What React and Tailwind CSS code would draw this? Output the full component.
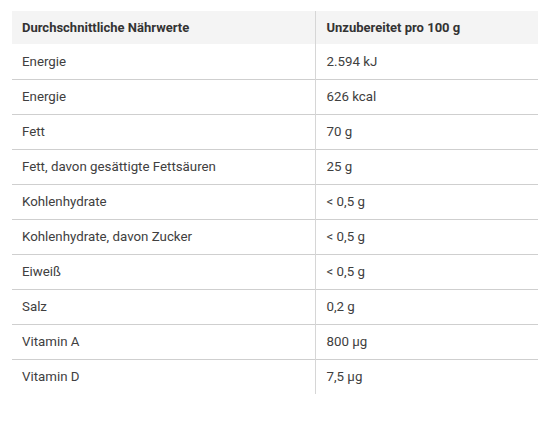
const rows = [
  ["Energie", "2.594 kJ"],
  ["Energie", "626 kcal"],
  ["Fett", "70 g"],
  ["Fett, davon gesättigte Fettsäuren", "25 g"],
  ["Kohlenhydrate", "< 0,5 g"],
  ["Kohlenhydrate, davon Zucker", "< 0,5 g"],
  ["Eiweiß", "< 0,5 g"],
  ["Salz", "0,2 g"],
  ["Vitamin A", "800 µg"],
  ["Vitamin D", "7,5 µg"],
];

export default function App() {
  return (
    <div
      className="w-[538px] h-[429px] bg-white pt-[11px] pl-[12px] text-[#404040]"
      style={{ fontFamily: "Roboto, 'Liberation Sans', sans-serif" }}
    >
      <table className="w-[526px] border-collapse text-[13.3px]">
        <thead>
          <tr className="h-[33px] bg-[#f4f4f4] text-[13px]">
            <th className="w-[303px] pl-[10px] text-left font-bold text-[#333] border-r border-[#d6d6d6]">
              Durchschnittliche Nährwerte
            </th>
            <th className="pl-[11px] text-left font-bold text-[#333]">Unzubereitet pro 100 g</th>
          </tr>
        </thead>
        <tbody>
          {rows.map(([label, value], i) => (
            <tr
              key={i}
              className={`h-[35px] ${i < rows.length - 1 ? "border-b border-[#cfcfcf]" : ""}`}
            >
              <td className="pl-[10px] pt-[1px] border-r border-[#d6d6d6]">{label}</td>
              <td className="pl-[11px] pt-[1px]">{value}</td>
            </tr>
          ))}
        </tbody>
      </table>
    </div>
  );
}
